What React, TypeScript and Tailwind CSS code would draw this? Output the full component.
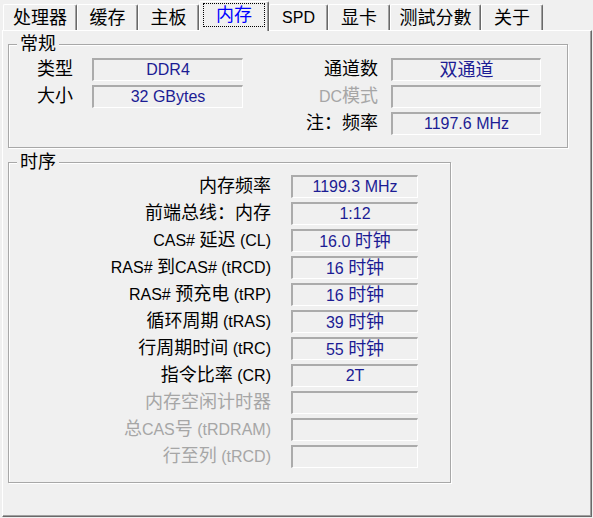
import React from 'react';

const cjk = /([\u2E80-\u9FFF\uFF00-\uFFEF]+)/;

// CJK runs render a bit larger than the Latin text, as on the Windows dialog
const T: React.FC<{ s: string }> = ({ s }) => (
  <>
    {s.split(cjk).map((p, i) =>
      cjk.test(p) ? (
        <span key={i} className="text-[18px]">
          {p}
        </span>
      ) : (
        <React.Fragment key={i}>{p}</React.Fragment>
      )
    )}
  </>
);

const tabs = [
  { name: '处理器', w: 'w-[74px]' },
  { name: '缓存', w: 'w-[61px]' },
  { name: '主板', w: 'w-[61px]' },
  { name: '内存', w: 'w-[70px]', active: true },
  { name: 'SPD', w: 'w-[59px]' },
  { name: '显卡', w: 'w-[62px]' },
  { name: '测試分數', w: 'w-[91px]' },
  { name: '关于', w: 'w-[62px]' },
];

const ValueBox: React.FC<{ value?: string; w: string }> = ({ value, w }) => (
  <div
    className={`${w} h-[23px] border-t-2 border-l-2 border-b border-r border-t-[#ababab] border-l-[#ababab] border-b-white border-r-white text-center text-[#1c1c94] leading-[20px] whitespace-nowrap`}
  >
    {value ? <T s={value} /> : null}
  </div>
);

const GroupBox: React.FC<{ title: string; className: string; children: React.ReactNode }> = ({
  title,
  className,
  children,
}) => (
  <div className={`relative border border-[#a8a8a8] shadow-[1px_1px_0_#fff,inset_1px_1px_0_#fff] ${className}`}>
    <span className="absolute left-[8px] top-[-12px] px-[3px] bg-[#f0f0f0] leading-[22px] text-black">
      <T s={title} />
    </span>
    {children}
  </div>
);

const timings: { label: string; value?: string; disabled?: boolean }[] = [
  { label: '内存频率', value: '1199.3 MHz' },
  { label: '前端总线：内存', value: '1:12' },
  { label: 'CAS# 延迟 (CL)', value: '16.0 时钟' },
  { label: 'RAS# 到CAS# (tRCD)', value: '16 时钟' },
  { label: 'RAS# 预充电 (tRP)', value: '16 时钟' },
  { label: '循环周期 (tRAS)', value: '39 时钟' },
  { label: '行周期时间 (tRC)', value: '55 时钟' },
  { label: '指令比率 (CR)', value: '2T' },
  { label: '内存空闲计时器', disabled: true },
  { label: '总CAS号 (tRDRAM)', disabled: true },
  { label: '行至列 (tRCD)', disabled: true },
];

const App: React.FC = () => {
  return (
    <div className="w-[593px] h-[518px] bg-[#f0f0f0] font-['Liberation_Sans','Noto_Sans_CJK_SC',sans-serif] text-[16px] text-black overflow-hidden">
      {/* Tabs */}
      <div className="h-[30px] flex items-end pl-[3px]">
        {tabs.map((t) =>
          t.active ? (
            <div
              key={t.name}
              className={`${t.w} relative z-10 h-[30px] -mb-px bg-[#f0f0f0] border-t border-l border-white border-r border-r-[#696969] shadow-[inset_-1px_0_0_#a0a0a0] rounded-t-[2px] px-[3px] pt-px pb-[4px]`}
            >
              <div className="h-full border border-dotted border-black flex items-center justify-center text-[#0000ff] leading-none">
                <T s={t.name} />
              </div>
            </div>
          ) : (
            <div
              key={t.name}
              className={`${t.w} h-[26px] border-t border-l border-white border-r border-r-[#696969] shadow-[inset_-1px_0_0_#a0a0a0] rounded-t-[2px] flex items-center justify-center leading-none`}
            >
              <T s={t.name} />
            </div>
          )
        )}
      </div>

      {/* Panel */}
      <div className="ml-[2px] w-[590px] h-[487px] border-t border-l border-white border-r border-b border-r-[#696969] border-b-[#696969] shadow-[inset_-1px_-1px_0_#a0a0a0]">
        <GroupBox title="常规" className="ml-[5px] mt-[13px] w-[560px] h-[104px]">
          <div className="grid grid-cols-[55px_151px_148px_150px] gap-y-[4px] pl-[28px] pt-[13px] leading-[23px]">
            <div>
              <T s="类型" />
            </div>
            <ValueBox value="DDR4" w="w-[151px]" />
            <div className="text-right pr-[13px]">
              <T s="通道数" />
            </div>
            <ValueBox value="双通道" w="w-[150px]" />

            <div>
              <T s="大小" />
            </div>
            <ValueBox value="32 GBytes" w="w-[151px]" />
            <div className="text-right pr-[13px] text-[#a6a6a6]">
              <T s="DC模式" />
            </div>
            <ValueBox w="w-[150px]" />

            <div />
            <div />
            <div className="text-right pr-[13px]">
              <T s="注：频率" />
            </div>
            <ValueBox value="1197.6 MHz" w="w-[150px]" />
          </div>
        </GroupBox>

        <GroupBox title="时序" className="ml-[5px] mt-[14px] w-[443px] h-[321px]">
          <div className="flex flex-col gap-[4px] pt-[12px] leading-[23px]">
            {timings.map((r) => (
              <div key={r.label} className="flex items-center gap-[20px]">
                <div className={`w-[262px] text-right whitespace-nowrap ${r.disabled ? 'text-[#a6a6a6]' : ''}`}>
                  <T s={r.label} />
                </div>
                <ValueBox value={r.value} w="w-[127px]" />
              </div>
            ))}
          </div>
        </GroupBox>
      </div>
    </div>
  );
};

export default App;
